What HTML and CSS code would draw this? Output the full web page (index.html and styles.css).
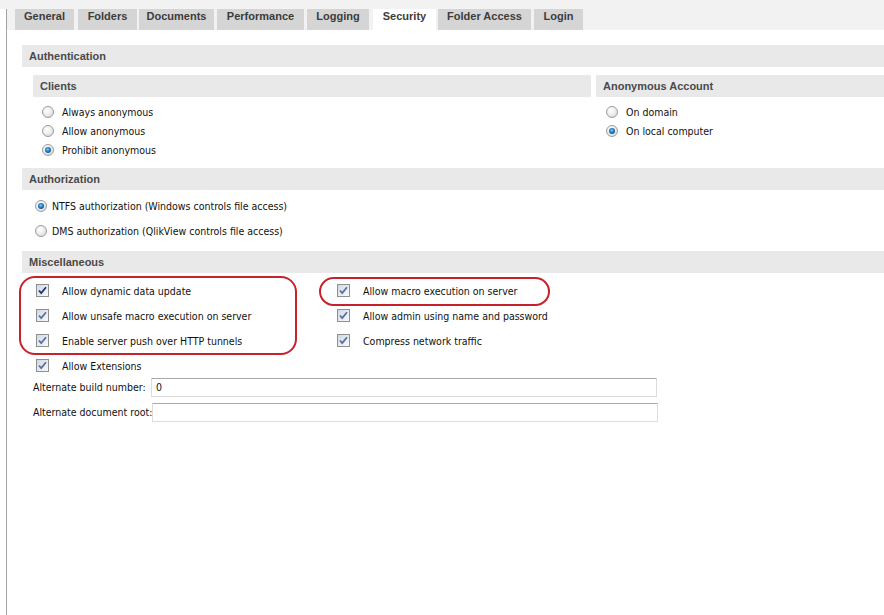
FILE: index.html
```html
<!DOCTYPE html>
<html>
<head>
<meta charset="utf-8">
<link rel="stylesheet" href="styles.css">
</head>
<body>
<div class="topstrip"></div>
<div class="frame">
  <div class="tabbar">
    <div class="tab w-general">General</div>
    <div class="tab w-folders">Folders</div>
    <div class="tab w-documents">Documents</div>
    <div class="tab w-performance">Performance</div>
    <div class="tab w-logging">Logging</div>
    <div class="tab w-security active">Security</div>
    <div class="tab w-access">Folder Access</div>
    <div class="tab w-login">Login</div>
  </div>
  <div class="content">
    <div class="section auth">
      <div class="bar">Authentication</div>
      <div class="authgrid">
        <div class="sub clients">
          <div class="bar">Clients</div>
          <div class="radios">
            <div class="rrow"><span class="radio"></span><span class="lbl">Always anonymous</span></div>
            <div class="rrow"><span class="radio"></span><span class="lbl">Allow anonymous</span></div>
            <div class="rrow"><span class="radio on"></span><span class="lbl">Prohibit anonymous</span></div>
          </div>
        </div>
        <div class="sub anon">
          <div class="bar">Anonymous Account</div>
          <div class="radios">
            <div class="rrow"><span class="radio"></span><span class="lbl">On domain</span></div>
            <div class="rrow"><span class="radio on"></span><span class="lbl">On local computer</span></div>
          </div>
        </div>
      </div>
    </div>
    <div class="section authz">
      <div class="bar">Authorization</div>
      <div class="zrows">
        <div class="zrow"><span class="radio on"></span><span class="lbl">NTFS authorization (Windows controls file access)</span></div>
        <div class="zrow"><span class="radio"></span><span class="lbl">DMS authorization (QlikView controls file access)</span></div>
      </div>
    </div>
    <div class="section misc">
      <div class="bar">Miscellaneous</div>
      <div class="miscbody">
        <div class="checks">
          <div class="crow"><span class="check dark"><svg viewBox="0 0 13 13" width="13" height="13"><path d="M3 6.5 L5.2 9 L10 3.2" fill="none" stroke="#1f3475" stroke-width="1.8"/></svg></span><span class="lbl">Allow dynamic data update</span></div>
          <div class="crow"><span class="check"><svg viewBox="0 0 13 13" width="13" height="13"><path d="M3 6.5 L5.2 9 L10 3.2" fill="none" stroke="#5d6f9c" stroke-width="1.8"/></svg></span><span class="lbl">Allow macro execution on server</span></div>
          <div class="crow"><span class="check"><svg viewBox="0 0 13 13" width="13" height="13"><path d="M3 6.5 L5.2 9 L10 3.2" fill="none" stroke="#5d6f9c" stroke-width="1.8"/></svg></span><span class="lbl">Allow unsafe macro execution on server</span></div>
          <div class="crow"><span class="check"><svg viewBox="0 0 13 13" width="13" height="13"><path d="M3 6.5 L5.2 9 L10 3.2" fill="none" stroke="#5d6f9c" stroke-width="1.8"/></svg></span><span class="lbl">Allow admin using name and password</span></div>
          <div class="crow"><span class="check"><svg viewBox="0 0 13 13" width="13" height="13"><path d="M3 6.5 L5.2 9 L10 3.2" fill="none" stroke="#5d6f9c" stroke-width="1.8"/></svg></span><span class="lbl">Enable server push over HTTP tunnels</span></div>
          <div class="crow"><span class="check"><svg viewBox="0 0 13 13" width="13" height="13"><path d="M3 6.5 L5.2 9 L10 3.2" fill="none" stroke="#5d6f9c" stroke-width="1.8"/></svg></span><span class="lbl">Compress network traffic</span></div>
          <div class="crow"><span class="check"><svg viewBox="0 0 13 13" width="13" height="13"><path d="M3 6.5 L5.2 9 L10 3.2" fill="none" stroke="#5d6f9c" stroke-width="1.8"/></svg></span><span class="lbl">Allow Extensions</span></div>
        </div>
        <div class="fields">
          <div class="frow"><span class="flbl">Alternate build number:</span><div class="input">0</div></div>
          <div class="frow"><span class="flbl">Alternate document root:</span><div class="input"></div></div>
        </div>
        <div class="oval oval-left"></div>
        <div class="oval oval-right"></div>
      </div>
    </div>
  </div>
</div>
</body>
</html>
```

FILE: styles.css
```css
html, body {
  margin: 0;
  padding: 0;
  background: #ffffff;
}
body {
  width: 884px;
  height: 615px;
  overflow: hidden;
  font-family: "DejaVu Sans Condensed", "DejaVu Sans", sans-serif;
  font-size: 10.5px;
  color: #111;
}
.topstrip {
  height: 9px;
  background: #f2f2f2;
}
.frame {
  margin-left: 6px;
  border-left: 1px solid #a3a3a3;
  height: 606px;
}
.tabbar {
  display: flex;
  gap: 3px;
  height: 21px;
  padding-left: 8px;
  background: #f2f2f2;
}
.tab {
  box-sizing: border-box;
  height: 21px;
  line-height: 14px;
  text-align: center;
  background: #d5d5d5;
  font-family: "Liberation Sans", Arial, sans-serif;
  font-weight: bold;
  font-size: 11px;
  color: #3c3c3c;
  white-space: nowrap;
}
.w-general { width: 59px; }
.w-folders { width: 59px; margin-left: 1px; }
.w-documents { width: 75px; margin-left: -1px; }
.w-performance { width: 87px; }
.w-logging { width: 62px; }
.w-security { width: 63px; margin-left: 1px; }
.w-access { width: 93px; margin-left: -1px; }
.w-login { width: 49px; }
.tab.active {
  background: #ffffff;
  height: 22px;
}
.content {
  padding: 15px 0 0 15px;
}
.bar {
  height: 22px;
  line-height: 22px;
  background: #e9e9e9;
  padding-left: 7px;
  font-family: "Liberation Sans", Arial, sans-serif;
  font-weight: bold;
  font-size: 11px;
  color: #4a4a4a;
}
.authgrid {
  display: grid;
  grid-template-columns: 558px 1fr;
  column-gap: 5px;
  margin-top: 8px;
  padding-left: 11px;
}
.radios {
  padding-top: 5px;
}
.rrow {
  height: 19px;
  display: flex;
  align-items: center;
}
.clients .rrow { padding-left: 9px; }
.anon .rrow { padding-left: 10px; }
.radio {
  box-sizing: border-box;
  width: 12px;
  height: 12px;
  border-radius: 50%;
  border: 1px solid #9d9d9d;
  background: radial-gradient(circle at 40% 35%, #ffffff 0%, #eeeeee 45%, #cfcfcf 100%);
  margin-right: 8px;
  position: relative;
  flex: none;
}
.radio.on::after {
  content: "";
  position: absolute;
  left: 2px;
  top: 2px;
  width: 6px;
  height: 6px;
  border-radius: 50%;
  background: radial-gradient(circle at 45% 40%, #7fd0ff 0%, #1a78c2 45%, #0b3b6e 100%);
}
.section.authz {
  margin-top: 9px;
}
.zrows {
  padding-top: 3px;
}
.zrow {
  height: 25px;
  display: flex;
  align-items: center;
  padding-left: 13px;
}
.zrow .radio { margin-right: 5px; }
.section.misc {
  margin-top: 8px;
}
.miscbody {
  position: relative;
  padding-top: 5px;
}
.checks {
  display: grid;
  grid-template-columns: 301px 1fr;
  padding-left: 14px;
}
.crow {
  height: 25px;
  display: flex;
  align-items: center;
}
.check {
  box-sizing: border-box;
  width: 13px;
  height: 13px;
  border: 1px solid #8e8f8f;
  background: linear-gradient(135deg, #cfd8e6 0%, #e8edf4 60%, #f7f9fb 100%);
  margin-right: 13px;
  flex: none;
  display: flex;
}
.check svg {
  margin: -1px;
}
.fields {
  padding-left: 11px;
}
.frow {
  height: 25px;
  display: flex;
  align-items: flex-start;
}
.flbl {
  min-width: 118px;
  line-height: 19px;
  flex: none;
  white-space: nowrap;
}
.input {
  box-sizing: border-box;
  width: 506px;
  height: 19px;
  border: 1px solid #dcdcdc;
  border-top-color: #a8a8a8;
  border-radius: 1px;
  line-height: 17px;
  padding-left: 4px;
}
.oval {
  position: absolute;
  box-sizing: border-box;
  border: 2px solid #c7222c;
}
.oval-left {
  left: -3px;
  top: 3px;
  width: 278px;
  height: 79px;
  border-radius: 16px;
}
.oval-right {
  left: 297px;
  top: 4px;
  width: 231px;
  height: 29px;
  border-radius: 15px;
}
```
